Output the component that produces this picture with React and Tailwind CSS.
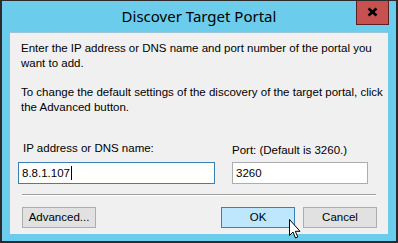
import React from "react";

const font = { fontFamily: "'Liberation Sans', Arial, sans-serif" };

const Button = ({ children, active, className = "" }) => (
  <button
    className={`h-[21px] w-[74px] text-[11.5px] leading-[15px] text-black border ${
      active ? "bg-[#bee6fd] border-[#3c7fb1]" : "bg-[#e1e1e1] border-[#adadad]"
    } ${className}`}
  >
    {children}
  </button>
);

export default function App() {
  return (
    <div
      className="relative w-[398px] h-[243px] bg-[#6bcdeb] border-l-2 border-t border-r-2 border-b-2 border-[#2b2b2b] overflow-hidden"
      style={font}
    >
      {/* title bar */}
      <div className="relative h-[31px] flex items-center justify-center">
        <span
          className="text-[15px] text-black"
          style={{ fontFamily: "'Noto Sans', 'Open Sans', sans-serif" }}
        >
          Discover Target Portal
        </span>
        <div className="absolute right-[7px] top-[-1px] w-[33px] h-[25px] bg-[#c75050] border border-[#5a2020] border-t-0 flex items-center justify-center">
          <svg width="11" height="10" viewBox="0 0 11 10">
            <path d="M1.5 1.5 L9.5 8.5 M9.5 1.5 L1.5 8.5" stroke="#000" strokeWidth="2.6" />
          </svg>
        </div>
      </div>

      {/* body */}
      <div className="ml-[8px] w-[378px] h-[202px] bg-[#f0f0f0] border-t border-[#9cc6d8] px-[11px] pt-[8px] text-[11.5px] text-black leading-[15px]">
        <p className="whitespace-nowrap">
          Enter the IP address or DNS name and port number of the portal you
          <br />
          want to add.
        </p>
        <p className="mt-[14px] whitespace-nowrap">
          To change the default settings of the discovery of the target portal, click
          <br />
          the Advanced button.
        </p>

        <div className="flex gap-[17px] mt-[26px]">
          <div className="flex flex-col">
            <span className="ml-[2px]">IP address or DNS name:</span>
            <div className="mt-[6px] ml-[-3px] w-[197px] h-[22px] bg-white border border-[#3c7fb1] flex items-center px-[3px]">
              <span>8.8.1.107</span>
              <span className="w-px h-[14px] bg-black ml-px" />
            </div>
          </div>
          <div className="flex flex-col">
            <span className="mt-[2px]">Port: (Default is 3260.)</span>
            <div className="mt-[4px] w-[136px] h-[22px] bg-white border border-[#abadb3] flex items-center px-[3px]">
              3260
            </div>
          </div>
        </div>

        <div className="mt-[10px] ml-[1px] w-[354px] h-px bg-[#a0a0a0] border-b border-white box-content" />

        <div className="flex mt-[11px] ml-[1px]">
          <Button>Advanced...</Button>
          <Button active className="ml-auto">OK</Button>
          <Button className="ml-[8px]">Cancel</Button>
        </div>
      </div>

      {/* mouse cursor */}
      <svg className="absolute left-[286px] top-[218px]" width="13" height="21" viewBox="0 0 13 21">
        <path
          d="M1.5 0.5 L1.5 16.5 L5 13 L7.5 19 L9.8 18 L7.3 12.3 L12 12.3 Z"
          fill="#fff"
          stroke="#000"
          strokeWidth="1"
          strokeLinejoin="miter"
        />
      </svg>
    </div>
  );
}
